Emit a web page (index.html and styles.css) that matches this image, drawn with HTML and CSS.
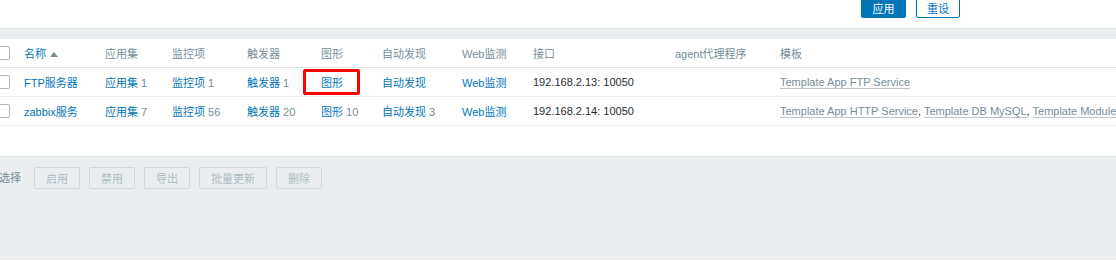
FILE: index.html
```html
<!DOCTYPE html>
<html lang="zh-CN">
  <head>
    <meta charset="utf-8" />
    <title>主机</title>
    <link rel="stylesheet" href="styles.css">
  </head>

  <body>
    <div class="filter-actions">
      <button class="btn primary">应用</button>
      <button class="btn alt">重设</button>
    </div>
    <div class="band"></div>

    <div class="scroller">
      <table class="list">
        <colgroup>
          <col style="width: 28px">
          <col style="width: 81px">
          <col style="width: 67px">
          <col style="width: 75px">
          <col style="width: 74px">
          <col style="width: 61px">
          <col style="width: 80px">
          <col style="width: 71px">
          <col style="width: 142px">
          <col style="width: 105px">
          <col style="width: 620px">
        </colgroup>
        <thead>
          <tr>
            <th><span class="check"></span></th>
            <th><a class="sort">名称</a><span class="arrow-up"></span></th>
            <th>应用集</th>
            <th>监控项</th>
            <th>触发器</th>
            <th>图形</th>
            <th>自动发现</th>
            <th>Web监测</th>
            <th>接口</th>
            <th>agent代理程序</th>
            <th>模板</th>
          </tr>
        </thead>
        <tbody>
          <tr>
            <td><span class="check"></span></td>
            <td><a>FTP服务器</a></td>
            <td><a>应用集</a> <span class="count">1</span></td>
            <td><a>监控项</a> <span class="count">1</span></td>
            <td><a>触发器</a> <span class="count">1</span></td>
            <td class="marked"><a>图形</a><span class="highlight"></span></td>
            <td><a>自动发现</a></td>
            <td><a>Web监测</a></td>
            <td>192.168.2.13: 10050</td>
            <td></td>
            <td><a class="alt">Template App FTP Service</a></td>
          </tr>
          <tr>
            <td><span class="check"></span></td>
            <td><a>zabbix服务</a></td>
            <td><a>应用集</a> <span class="count">7</span></td>
            <td><a>监控项</a> <span class="count">56</span></td>
            <td><a>触发器</a> <span class="count">20</span></td>
            <td><a>图形</a> <span class="count">10</span></td>
            <td><a>自动发现</a> <span class="count">3</span></td>
            <td><a>Web监测</a></td>
            <td>192.168.2.14: 10050</td>
            <td></td>
            <td><a class="alt">Template App HTTP Service</a>, <a class="alt">Template DB MySQL</a>, <a class="alt">Template Module ICMP Ping</a></td>
          </tr>
        </tbody>
      </table>
    </div>

    <div class="paging"></div>

    <div class="action-bar">
      <span class="selected">选择</span>
      <button class="btn off">启用</button>
      <button class="btn off">禁用</button>
      <button class="btn off">导出</button>
      <button class="btn off">批量更新</button>
      <button class="btn off">删除</button>
    </div>
  </body>
</html>
```

FILE: styles.css
```css
html, body {
  margin: 0;
  padding: 0;
  overflow: hidden;
}

body {
  font-family: "Liberation Sans", Arial, "Noto Sans CJK SC", sans-serif;
  font-size: 11px;
  color: #1f2c33;
  background: #fff;
  width: 1116px;
  height: 261px;
}

a {
  color: #0275b8;
  text-decoration: none;
  cursor: pointer;
}

/* top filter buttons, partly scrolled out */
.filter-actions {
  height: 28px;
  display: flex;
  align-items: flex-start;
  gap: 10px;
  padding-left: 861px;
  box-sizing: border-box;
}

.btn {
  font-family: inherit;
  font-size: 11px;
  height: 24px;
  padding: 0 10px;
  border-radius: 2px;
  cursor: pointer;
}

.filter-actions .btn {
  margin-top: -6px;
  width: 45px;
  padding: 4px 0 0;
}

.btn.primary {
  background: #0275b8;
  border: 1px solid #0275b8;
  color: #fff;
}

.btn.alt {
  background: #fff;
  border: 1px solid #0275b8;
  color: #0275b8;
  width: 44px;
}

.band {
  height: 10px;
  background: #ebeef0;
  border-top: 1px solid #dfe4e7;
}

.scroller {
  margin-left: -9px;
}

.list {
  border-collapse: collapse;
  table-layout: fixed;
  width: 1404px;
}

.list th,
.list td {
  height: 28px;
  padding: 0 5px;
  text-align: left;
  white-space: nowrap;
  overflow: hidden;
  border-bottom: 1px solid #ebeef0;
  box-sizing: content-box;
}

.list th {
  font-weight: normal;
  color: #768d99;
  border-bottom-color: #dfe4e7;
}

.check {
  display: inline-block;
  width: 12px;
  height: 12px;
  border: 1px solid #acbbc2;
  border-radius: 2px;
  background: #fff;
  vertical-align: middle;
}

.arrow-up {
  display: inline-block;
  margin-left: 4px;
  border-left: 4px solid transparent;
  border-right: 4px solid transparent;
  border-bottom: 5px solid #768d99;
  vertical-align: 1px;
}

.count {
  color: #768d99;
}

a.alt {
  color: #768d99;
  border-bottom: 1px solid rgba(118, 141, 153, 0.5);
}

.list td.marked {
  position: relative;
  overflow: visible;
}

.highlight {
  position: absolute;
  left: -13px;
  top: 1px;
  width: 57px;
  height: 26px;
  border: 3px solid #f00;
  border-radius: 2px;
  box-sizing: border-box;
}

.paging {
  height: 30px;
}

.action-bar {
  background: #ebeef0;
  border-top: 1px solid #dfe4e7;
  height: 104px;
  display: flex;
  align-items: flex-start;
  gap: 9px;
  padding-top: 10px;
  box-sizing: border-box;
}

.selected {
  color: #768d99;
  line-height: 22px;
  margin-left: -1px;
  margin-right: 4px;
}

.btn.off {
  background: #ebeef0;
  border: 1px solid #cfd8dc;
  color: #acbbc2;
  height: 22px;
  padding: 0 11px;
  cursor: default;
}
```
